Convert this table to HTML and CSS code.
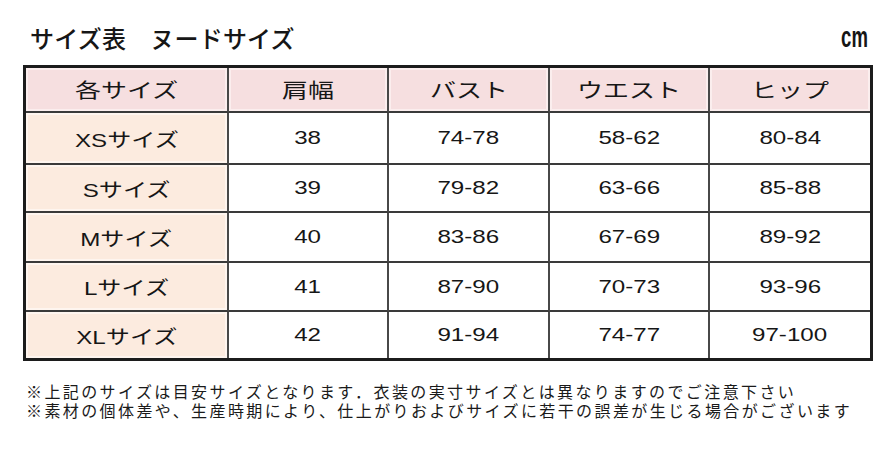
FILE: index.html
```html
<!DOCTYPE html>
<html lang="ja">
<head>
<meta charset="utf-8">
<title>サイズ表 ヌードサイズ</title>
<link rel="stylesheet" href="styles.css">
</head>
<body>
<div class="page">
  <div class="top">
    <h1 class="title">サイズ表　ヌードサイズ</h1>
    <span class="unit"><span class="unit-text">cm</span></span>
  </div>
  <div class="chart">
    <div class="cell head"><span>各サイズ</span></div>
    <div class="cell head"><span>肩幅</span></div>
    <div class="cell head"><span>バスト</span></div>
    <div class="cell head"><span>ウエスト</span></div>
    <div class="cell head"><span>ヒップ</span></div>

    <div class="cell size"><span>XSサイズ</span></div>
    <div class="cell"><span>38</span></div>
    <div class="cell"><span>74-78</span></div>
    <div class="cell"><span>58-62</span></div>
    <div class="cell"><span>80-84</span></div>

    <div class="cell size"><span>Sサイズ</span></div>
    <div class="cell"><span>39</span></div>
    <div class="cell"><span>79-82</span></div>
    <div class="cell"><span>63-66</span></div>
    <div class="cell"><span>85-88</span></div>

    <div class="cell size"><span>Mサイズ</span></div>
    <div class="cell"><span>40</span></div>
    <div class="cell"><span>83-86</span></div>
    <div class="cell"><span>67-69</span></div>
    <div class="cell"><span>89-92</span></div>

    <div class="cell size"><span>Lサイズ</span></div>
    <div class="cell"><span>41</span></div>
    <div class="cell"><span>87-90</span></div>
    <div class="cell"><span>70-73</span></div>
    <div class="cell"><span>93-96</span></div>

    <div class="cell size"><span>XLサイズ</span></div>
    <div class="cell"><span>42</span></div>
    <div class="cell"><span>91-94</span></div>
    <div class="cell"><span>74-77</span></div>
    <div class="cell"><span>97-100</span></div>
  </div>
  <div class="notes">
    <p class="note">※上記のサイズは目安サイズとなります．衣装の実寸サイズとは異なりますのでご注意下さい</p>
    <p class="note">※素材の個体差や、生産時期により、仕上がりおよびサイズに若干の誤差が生じる場合がございます</p>
  </div>
</div>
</body>
</html>
```
FILE: styles.css
```css
html, body {
  margin: 0;
  padding: 0;
  background: #ffffff;
}

.page {
  width: 894px;
  height: 452px;
  color: #161616;
  font-family: "Liberation Sans", "Noto Sans CJK JP", sans-serif;
  overflow: hidden;
}

.top {
  display: flex;
  justify-content: space-between;
  align-items: flex-start;
  padding: 23px 26px 0 30px;
}

.title {
  margin: 3px 0 0 0;
  font-family: "Noto Sans CJK JP", sans-serif;
  font-size: 24px;
  line-height: 24px;
  font-weight: 500;
  letter-spacing: 0.2px;
}

.unit {
  display: block;
  font-family: "Liberation Sans", sans-serif;
  font-weight: 700;
  font-size: 29px;
  line-height: 29px;
}

.unit-text {
  display: inline-block;
  transform: scaleX(0.64);
  transform-origin: right center;
}

.chart {
  display: grid;
  grid-template-columns: 203px 160px 161px 160px 160px;
  grid-template-rows: 45px 52px 48px 50px 49px 46px;
  width: 850px;
  box-sizing: border-box;
  margin: 13px 0 0 23px;
  border: 3px solid #1c1c1c;
}

.cell {
  display: flex;
  align-items: center;
  justify-content: center;
  box-sizing: border-box;
  border-right: 2px solid #484848;
  border-bottom: 2px solid #3a3a3a;
  font-size: 19px;
  background: #ffffff;
}

.cell:nth-child(5n) {
  border-right: none;
}

.cell:nth-last-child(-n+5) {
  border-bottom: none;
}

.cell span {
  display: inline-block;
  transform: scaleX(1.27);
  white-space: nowrap;
}

.head {
  background: #f6dfe0;
  box-shadow: inset 0 0 0 2px #fbeeee;
  font-size: 20px;
}

.head span {
  font-family: "Noto Sans CJK JP", sans-serif;
  transform: scaleX(1.3);
}

.size {
  background: #fcebdf;
  box-shadow: inset 0 0 0 2px #fef5ef;
}

.notes {
  margin: 22px 0 0 26px;
  font-family: "Liberation Sans", "Noto Sans CJK JP", sans-serif;
  font-size: 16px;
  letter-spacing: 2.4px;
  color: #1a1a1a;
}

.note {
  margin: 0;
  line-height: 19px;
  white-space: nowrap;
}
```
